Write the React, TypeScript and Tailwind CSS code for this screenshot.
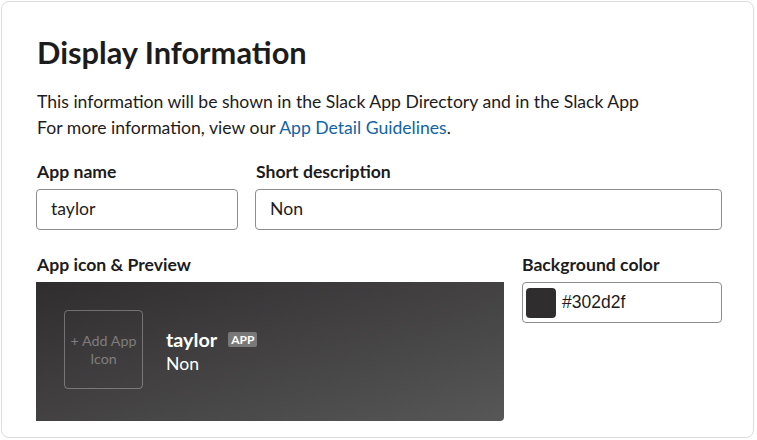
const AppIconPlaceholder = () => {
  return (
    <div className="w-[79px] h-[79px] shrink-0 rounded border border-white/30 flex items-center justify-center text-center text-[14.3px] leading-[18px] text-white/35">
      + Add App
      <br />
      Icon
    </div>
  );
};

const App = () => {
  const appName = "taylor";
  const shortDescription = "Non";
  const backgroundColor = "#302d2f";

  return (
    <div className="w-[757px] h-[440px] bg-white font-['Lato',sans-serif] text-[#1d1c1d] p-px">
      <div className="w-[753px] h-[437px] rounded-lg border border-[#dddddd] pl-[34px] pr-[31px] pt-[32px]">
        <h1 className="pl-px text-[30.8px] leading-[38px] font-bold">Display Information</h1>

        <div className="mt-[17px] pl-px text-[17.6px] leading-[26px]">
          <p>This information will be shown in the Slack App Directory and in the Slack App</p>
          <p>
            For more information, view our{" "}
            <a href="#" className="text-[#1264a3]">
              App Detail Guidelines
            </a>
            .
          </p>
        </div>

        <div className="mt-[19px] flex gap-[17px]">
          <div className="w-[202px]">
            <label className="block pl-px text-[17.6px] leading-[24px] font-bold">App name</label>
            <div className="mt-[5px] h-[41px] rounded border border-[#8d8d8d] px-[14px] flex items-center text-[17.6px]">
              {appName}
            </div>
          </div>
          <div className="flex-1">
            <label className="block pl-px text-[17.6px] leading-[24px] font-bold">Short description</label>
            <div className="mt-[5px] h-[41px] rounded border border-[#8d8d8d] px-[14px] flex items-center text-[17.6px]">
              {shortDescription}
            </div>
          </div>
        </div>

        <div className="mt-[23px] flex gap-[18px]">
          <div className="w-[468px]">
            <label className="block pl-px text-[17.6px] leading-[24px] font-bold">App icon &amp; Preview</label>
            <div className="mt-[5px] h-[139px] rounded-br-sm bg-gradient-to-br from-[#302d2f] to-[#575757] flex items-start pt-[28px] pl-[28px] gap-[23px]">
              <AppIconPlaceholder />
              <div className="text-white mt-[17px]">
                <div className="flex items-center gap-[11px]">
                  <span className="text-[19.8px] leading-[25px] font-bold">{appName}</span>
                  <span className="rounded-[2px] bg-white/30 px-[3px] text-[12px] leading-[15px] font-bold">
                    APP
                  </span>
                </div>
                <div className="text-[17.6px] leading-[24px]">{shortDescription}</div>
              </div>
            </div>
          </div>
          <div className="flex-1">
            <label className="block text-[17.6px] leading-[24px] font-bold">Background color</label>
            <div className="mt-[5px] h-[41px] rounded border border-[#8d8d8d] flex items-center pl-[3px] gap-[6px]">
              <div
                className="w-[30px] h-[30px] rounded"
                style={{ backgroundColor: backgroundColor }}
              />
              <span className="font-['Liberation_Sans',sans-serif] text-[17.5px] text-[#1d1c1d]">
                {backgroundColor}
              </span>
            </div>
          </div>
        </div>
      </div>
    </div>
  );
};

export default App;
